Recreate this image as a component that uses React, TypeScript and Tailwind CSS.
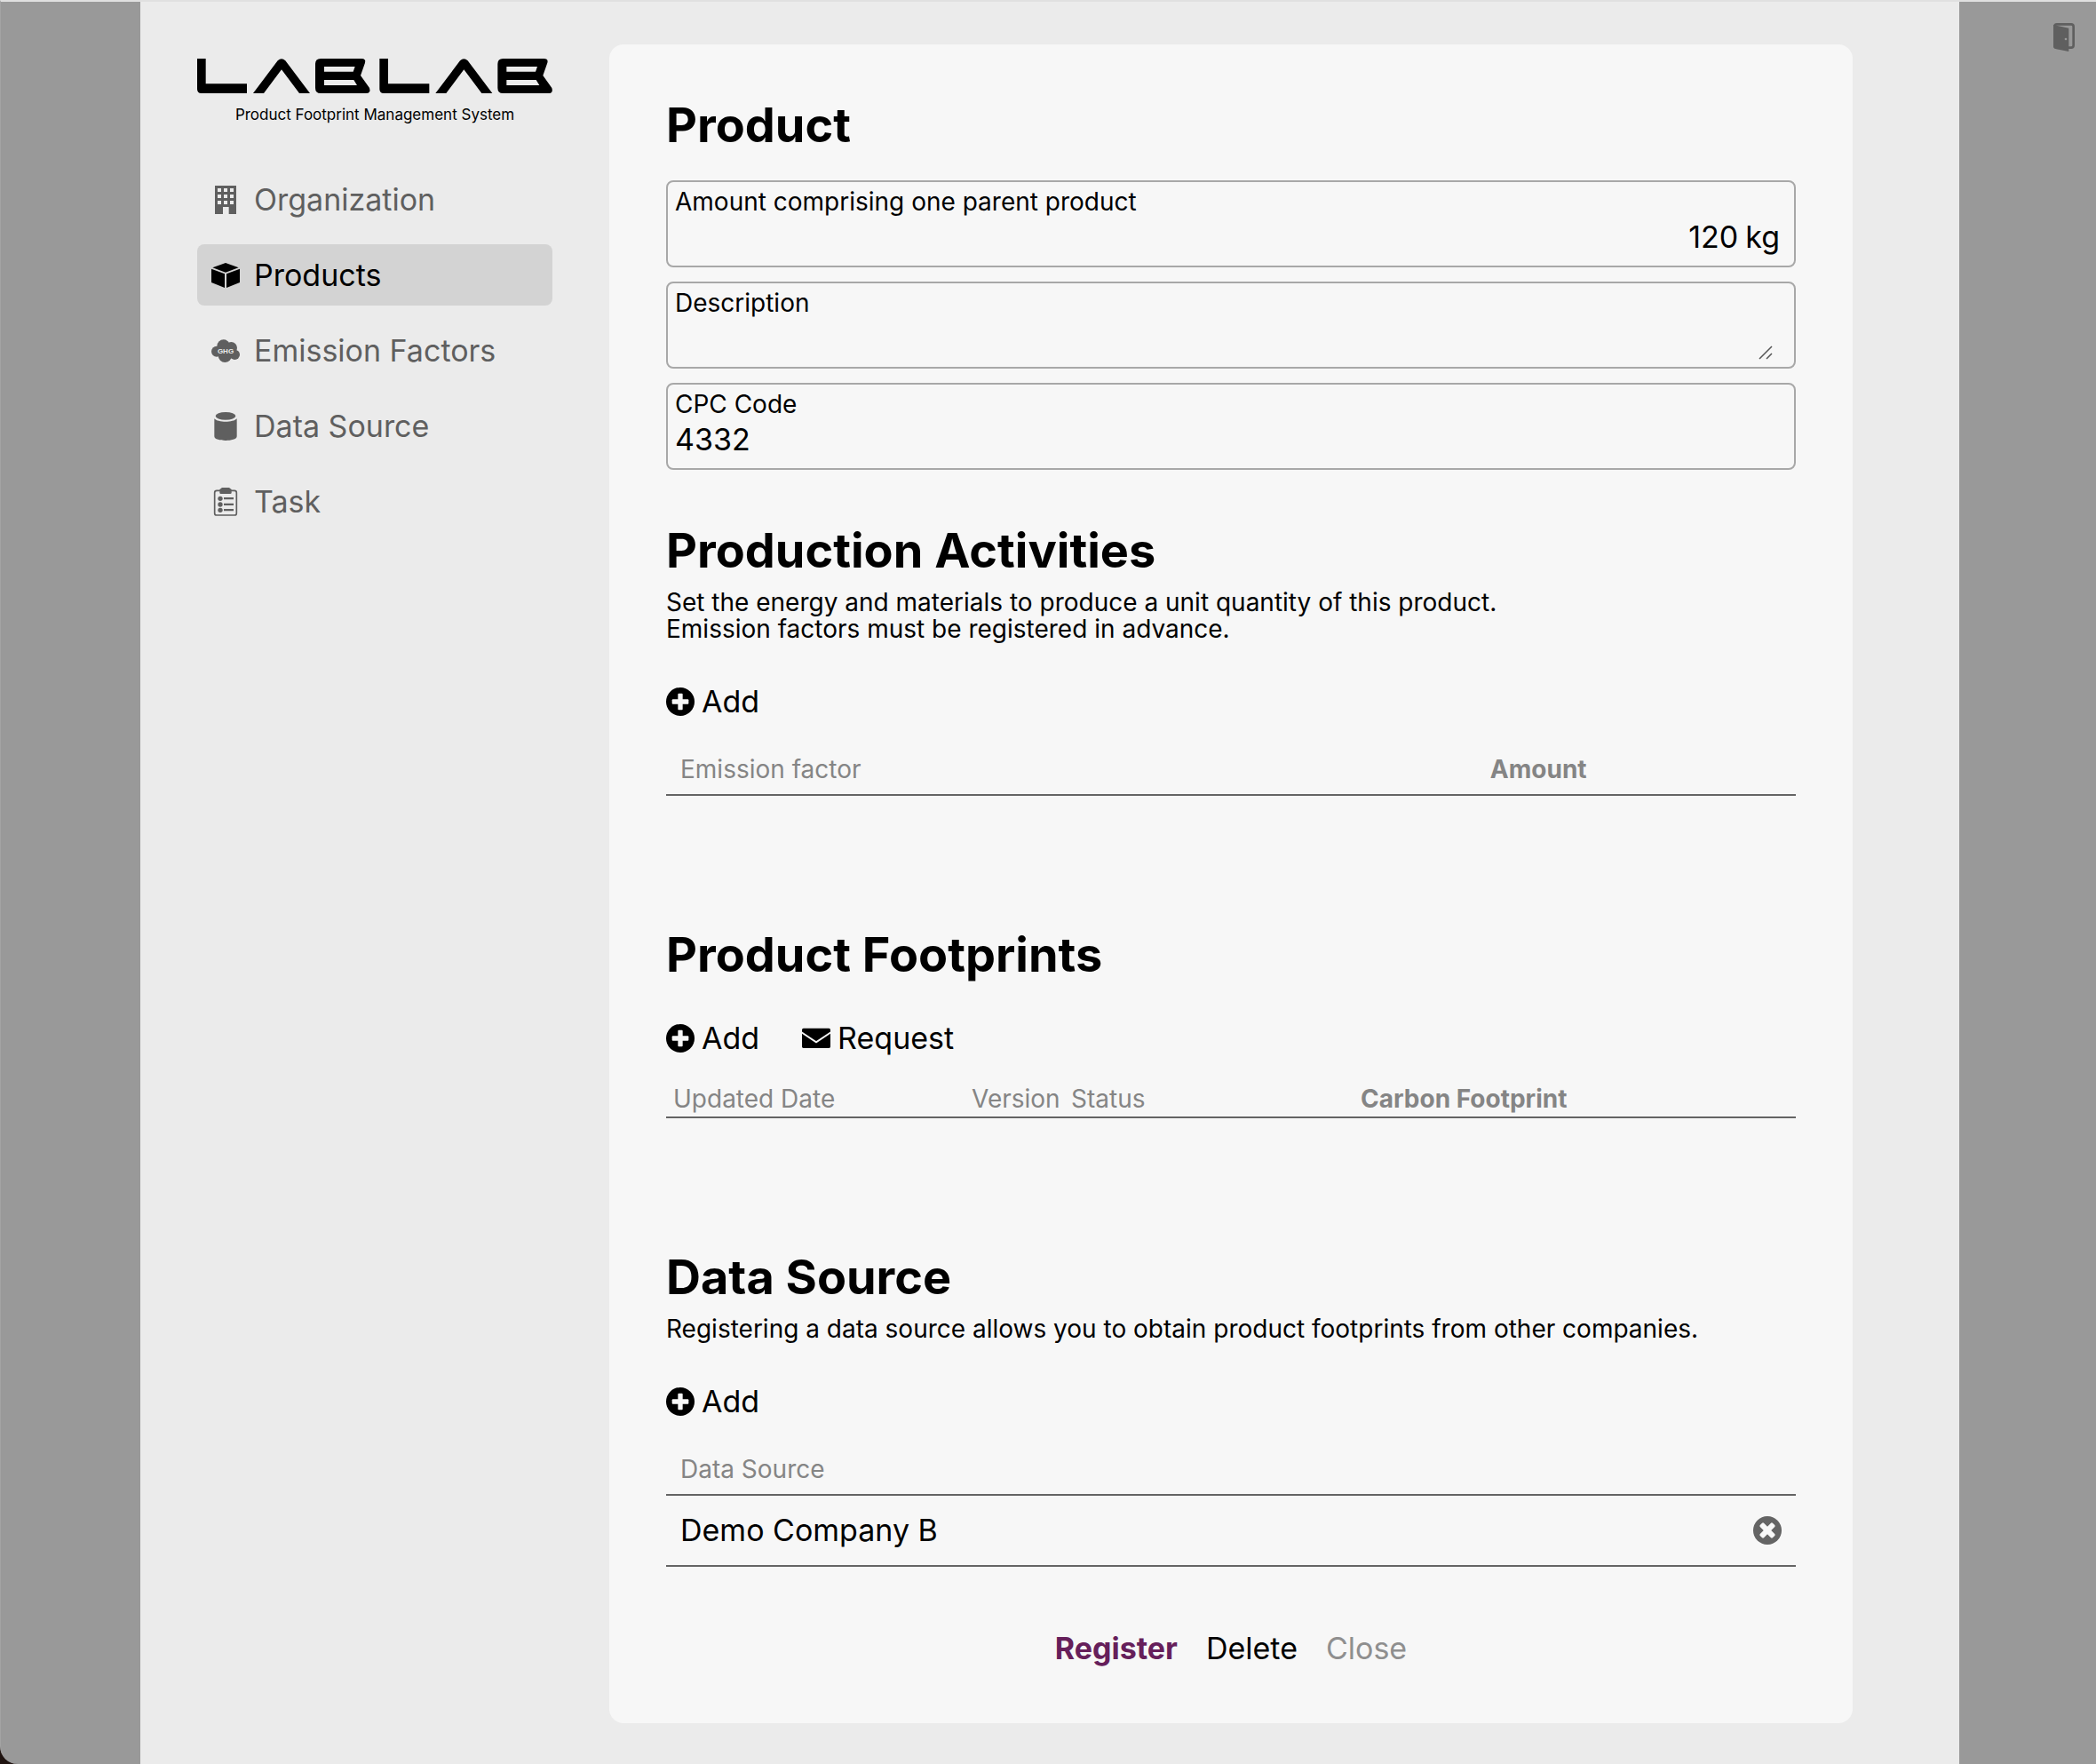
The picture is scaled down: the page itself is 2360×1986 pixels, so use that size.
import type { ReactNode } from "react";

function Logo() {
  const b = "M417 0H555Q571 0 567 14L552 57L582 99Q588 117 570 117H417Q399 117 399 99V18Q399 0 417 0ZM429 27V44H527L533 27ZM429 72V90H540L529 72Z";
  const l = "M0 0H29V85H168V117H14Q0 117 0 103Z";
  const a = "M189 117L272 7Q285 -6 298 7L381 117H345L285 37L225 117Z";
  return (
    <svg viewBox="0 0 1200 117" className="block h-[39px] w-full" role="img" aria-label="LABLAB" fillRule="evenodd">
      <path d={l} />
      <path d={a} />
      <path d={b} />
      <g transform="translate(616 0)">
        <path d={l} />
        <path d={a} />
        <path d={b} />
      </g>
    </svg>
  );
}

function Icon({ children }: { children: ReactNode }) {
  return (
    <svg viewBox="0 0 96 96" className="size-8 shrink-0" fill="currentColor" aria-hidden="true">
      {children}
    </svg>
  );
}

const BuildingIcon = () => (
  <Icon>
    <path
      fillRule="evenodd"
      d="M12 0H84V96H59V72H39V96H12ZM21 9V21H33V9ZM42 9V21H54V9ZM63 9V21H75V9ZM21 30V42H33V30ZM42 30V42H54V30ZM63 30V42H75V30ZM21 51V63H33V51ZM42 51V63H54V51ZM63 51V63H75V51Z"
    />
  </Icon>
);

const BoxIcon = () => (
  <Icon>
    <path d="M48 6L92 22L48 38L4 22ZM0 26L45 43V90L0 72ZM96 26L51 43V90L96 72Z" />
  </Icon>
);

const CloudIcon = () => (
  <Icon>
    <circle cx="18" cy="50" r="18" />
    <circle cx="41" cy="32" r="22" />
    <circle cx="67" cy="38" r="20" />
    <circle cx="79" cy="61" r="17" />
    <circle cx="46" cy="64" r="23" />
    <text x="48" y="57" textAnchor="middle" className="fill-[#ebebeb] font-['Liberation_Sans'] text-[24px] font-bold">
      GHG
    </text>
  </Icon>
);

const CylinderIcon = () => (
  <Icon>
    <ellipse cx="48" cy="13" rx="34" ry="13" />
    <path d="M10 22C22 36 74 36 86 22V82C86 92 66 96 48 96S10 92 10 82Z" />
  </Icon>
);

const TaskIcon = () => (
  <Icon>
    <rect x="11" y="10" width="74" height="83" rx="7" fill="none" stroke="currentColor" strokeWidth="5" />
    <path d="M36 0H60L68 6V17Q68 21 64 21H32Q28 21 28 17V6Z" />
    <circle cx="30" cy="37" r="8" />
    <circle cx="30" cy="57" r="8" />
    <circle cx="30" cy="76" r="8" />
    <path d="M42 33H75V40H42ZM42 53H75V60H42ZM42 72H75V79H42Z" />
  </Icon>
);

const PlusIcon = () => (
  <Icon>
    <circle cx="48" cy="48" r="48" />
    <g fill="#f7f7f7">
      <rect x="20" y="40" width="56" height="16" rx="3" />
      <rect x="40" y="20" width="16" height="56" rx="3" />
    </g>
  </Icon>
);

const RemoveIcon = () => (
  <Icon>
    <circle cx="48" cy="48" r="48" />
    <g fill="#f7f7f7" transform="rotate(45 48 48)">
      <rect x="18" y="39" width="60" height="18" rx="4" />
      <rect x="39" y="18" width="18" height="60" rx="4" />
    </g>
  </Icon>
);

const MailIcon = () => (
  <Icon>
    <rect y="14" width="96" height="67" rx="5" />
    <path d="M-3 27L48 61L99 27" fill="none" stroke="#f7f7f7" strokeWidth="6" />
  </Icon>
);

const DoorIcon = () => (
  <svg viewBox="0 0 72 96" className="h-8 w-6" aria-hidden="true">
    <rect x="4" y="4" width="64" height="79" rx="8" fill="none" stroke="currentColor" strokeWidth="8" />
    <path d="M0 6L52 17V96L10 88Q0 86 0 78Z" fill="currentColor" />
    <circle cx="42" cy="54" r="4" fill="#999999" />
  </svg>
);

const navItems = [
  { label: "Organization", icon: <BuildingIcon /> },
  { label: "Products", icon: <BoxIcon />, active: true },
  { label: "Emission Factors", icon: <CloudIcon /> },
  { label: "Data Source", icon: <CylinderIcon /> },
  { label: "Task", icon: <TaskIcon /> },
];

function Title({ children }: { children: ReactNode }) {
  return <h2 className="text-[54px] leading-[54px] font-bold">{children}</h2>;
}

function Note({ children }: { children: ReactNode }) {
  return <p className="mt-4 text-[28px] leading-[30px]">{children}</p>;
}

function Field({ id, label, children }: { id: string; label: string; children: ReactNode }) {
  return (
    <div className="rounded-lg border-2 border-[#a8a8a8] px-2 pt-1.5 pb-2">
      <label htmlFor={id} className="block text-[28px] leading-8">
        {label}
      </label>
      <div className="flex h-12 items-center text-[34px] leading-[48px]">{children}</div>
    </div>
  );
}

function Action({ icon, children }: { icon: ReactNode; children: ReactNode }) {
  return (
    <button type="button" className="flex h-10 items-center gap-2 text-[34px] leading-10">
      {icon}
      {children}
    </button>
  );
}

export default function App() {
  return (
    <div className="bg-[#1f1310] font-['Inter','Noto_Sans_CJK_JP',sans-serif] text-black">
      <div className="flex min-h-screen rounded-bl-[20px] border-t-2 border-l border-t-[#e0e0e0] border-l-[#a3a3a3] bg-[#999999] pl-[3px]">
        <div className="flex-1" />
        <div className="flex w-full max-w-[2048px] items-start gap-16 bg-[#ebebeb] pt-12 pr-[120px] pb-10 pl-16">
          <aside className="w-[400px] shrink-0 pt-4">
            <Logo />
            <p className="mt-3 text-center text-[17px] leading-6">Product Footprint Management System</p>
            <nav className="mt-[49px] flex flex-col gap-4">
              {navItems.map((item) => (
                <a
                  key={item.label}
                  href="#"
                  aria-current={item.active ? "page" : undefined}
                  className={
                    item.active
                      ? "flex h-[69px] items-center gap-4 rounded-lg bg-[#d3d3d3] px-4 text-[34px] text-black"
                      : "flex h-[69px] items-center gap-4 rounded-lg px-4 text-[34px] text-[#5f5f5f]"
                  }
                >
                  {item.icon}
                  {item.label}
                </a>
              ))}
            </nav>
          </aside>

          <main className="min-w-0 flex-1 rounded-2xl bg-[#f7f7f7] p-16">
            <section>
              <Title>Product</Title>
              <div className="mt-[35px] flex flex-col gap-4">
                <Field id="amount" label="Amount comprising one parent product">
                  <input id="amount" defaultValue="120" className="min-w-0 flex-1 bg-transparent text-right outline-none" />
                  <span className="px-2">kg</span>
                </Field>
                <Field id="description" label="Description">
                  <textarea id="description" rows={1} className="h-12 min-w-0 flex-1 resize-none bg-transparent outline-none" />
                  <svg viewBox="0 0 16 16" className="mr-4 size-4 self-end" stroke="#555555" strokeWidth="1.5" aria-hidden="true">
                    <path d="M1 15L15 1M9 15L15 9" />
                  </svg>
                </Field>
                <Field id="cpc" label="CPC Code">
                  <input id="cpc" defaultValue="4332" className="min-w-0 flex-1 bg-transparent outline-none" />
                </Field>
              </div>
            </section>

            <section className="mt-16">
              <Title>Production Activities</Title>
              <Note>
                Set the energy and materials to produce a unit quantity of this product.
                <br />
                Emission factors must be registered in advance.
              </Note>
              <div className="mt-[47px]">
                <Action icon={<PlusIcon />}>Add</Action>
              </div>
              <table className="mt-7 w-full table-fixed text-left text-[28px] leading-8 text-[#858585]">
                <thead>
                  <tr className="border-b-2 border-[#646464]">
                    <th className="w-[72%] px-4 py-3 font-normal">Emission factor</th>
                    <th className="px-3 py-3 font-bold">Amount</th>
                  </tr>
                </thead>
              </table>
            </section>

            <section className="mt-[152px]">
              <Title>Product Footprints</Title>
              <div className="mt-[47px] flex gap-12">
                <Action icon={<PlusIcon />}>Add</Action>
                <Action icon={<MailIcon />}>Request</Action>
              </div>
              <table className="mt-7 w-full table-fixed text-left text-[28px] leading-8 text-[#858585]">
                <thead>
                  <tr className="border-b-2 border-[#646464]">
                    <th className="w-[336px] py-1 pl-2 font-normal">Updated Date</th>
                    <th className="w-[112px] py-1 pl-2 font-normal">Version</th>
                    <th className="w-[326px] py-1 pl-2 font-normal">Status</th>
                    <th className="py-1 pl-2 font-bold">Carbon Footprint</th>
                  </tr>
                </thead>
              </table>
            </section>

            <section className="mt-[152px]">
              <Title>Data Source</Title>
              <Note>Registering a data source allows you to obtain product footprints from other companies.</Note>
              <div className="mt-[47px]">
                <Action icon={<PlusIcon />}>Add</Action>
              </div>
              <table className="mt-7 w-full text-left">
                <thead className="text-[28px] leading-8 text-[#858585]">
                  <tr className="border-b-2 border-[#646464]">
                    <th className="px-4 py-3 font-normal">Data Source</th>
                    <td />
                  </tr>
                </thead>
                <tbody className="text-[34px] leading-[46px]">
                  <tr className="border-b-2 border-[#646464]">
                    <td className="px-4 py-4">Demo Company B</td>
                    <td className="w-16 px-4 py-4">
                      <button type="button" aria-label="Remove" className="flex size-8 items-center text-[#646464]">
                        <RemoveIcon />
                      </button>
                    </td>
                  </tr>
                </tbody>
              </table>
            </section>

            <div className="mt-[72px] flex justify-center gap-8 text-[34px] leading-10">
              <button type="button" className="font-bold text-[#661f5b]">Register</button>
              <button type="button">Delete</button>
              <button type="button" className="text-[#8f8f8f]">Close</button>
            </div>
          </main>
        </div>
        <div className="flex-1">
          <div className="flex justify-end pt-6 pr-6">
            <button type="button" aria-label="Sign out" className="text-[#5f5f5f]">
              <DoorIcon />
            </button>
          </div>
        </div>
      </div>
    </div>
  );
}
